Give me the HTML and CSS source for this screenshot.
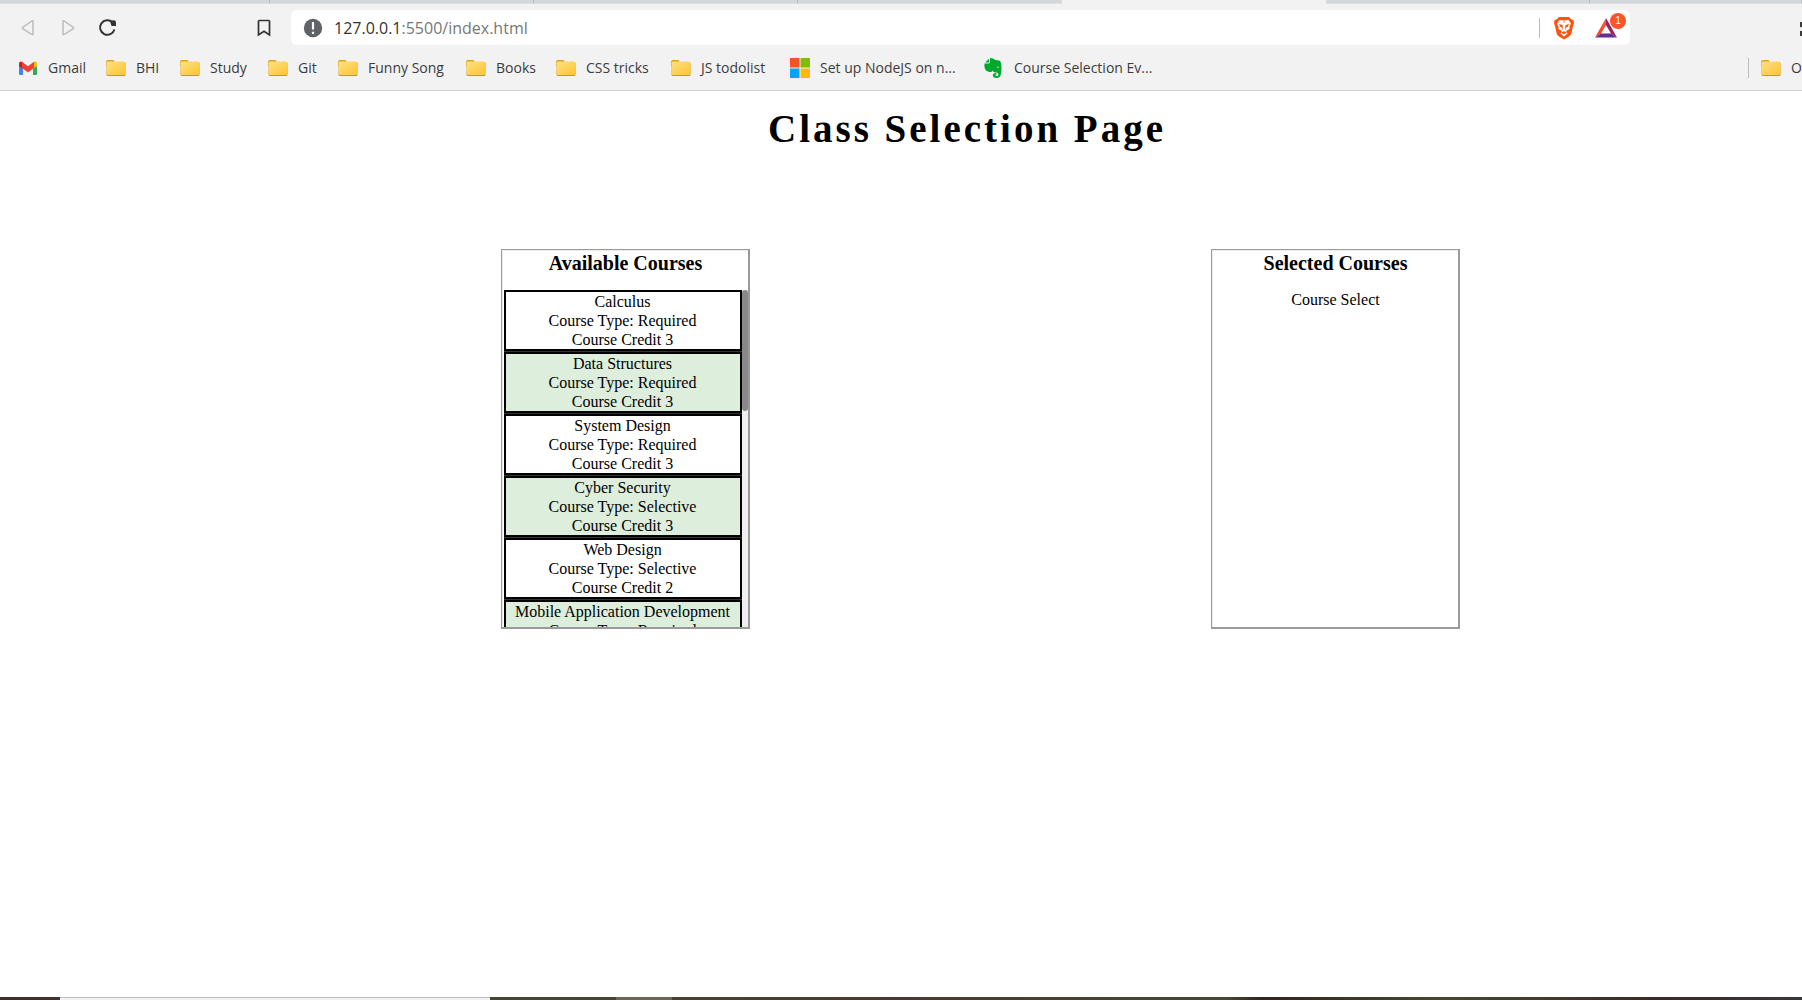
FILE: index.html
```html
<!DOCTYPE html>
<html lang="en">
<head>
<meta charset="utf-8">
<title>Class Selection Page</title>
<link rel="stylesheet" href="styles.css">
</head>
<body>
<svg class="defs" width="0" height="0" aria-hidden="true">
  <defs>
    <linearGradient id="fold" x1="0" y1="0" x2="1" y2="1"><stop offset="0" stop-color="#ffe083"/><stop offset="1" stop-color="#fdc531"/></linearGradient>
    <linearGradient id="batLeft" x1="0" y1="0" x2="0" y2="1"><stop offset="0" stop-color="#ff5b2e"/><stop offset="1" stop-color="#f0412a"/></linearGradient>
    <symbol id="folder" viewBox="0 0 20 20">
      <path d="M0 4.500Q0 2 1.500 2H7.500L9 4H18V8H0Z" fill="#e2a21b"/>
      <rect x=".5" y="4" width="19" height="14" rx="1.500" fill="#b9984a"/>
      <rect x=".5" y="3.500" width="19" height="13.500" rx="1.500" fill="url(#fold)"/>
    </symbol>
  </defs>
</svg>
<header class="chrome">
  <div class="tabs"><i></i><i></i><i></i><i></i><i class="active"></i><i></i><i></i></div>
  <div class="toolbar">
    <nav class="controls" aria-label="Navigation">
      <button type="button" aria-label="Back"><svg width="20" height="20" viewBox="0 0 20 20"><path d="M15 3.500V16Q15 17.300 13.800 16.500L5 10.800Q4 10 5 9.200L13.800 3Q15 2.200 15 3.500Z" fill="none" stroke="#bcbcbc" stroke-width="1.500"/></svg></button>
      <button type="button" aria-label="Forward"><svg width="20" height="20" viewBox="0 0 20 20"><path d="M5 3.500V16Q5 17.300 6.200 16.500L15 10.800Q16 10 15 9.200L6.200 3Q5 2.200 5 3.500Z" fill="none" stroke="#bcbcbc" stroke-width="1.500"/></svg></button>
      <button type="button" aria-label="Reload"><svg width="20" height="20" viewBox="0 0 20 20"><path d="M14.500 4.300A7.300 7.300 0 1 0 16.400 11.500" fill="none" stroke="#333" stroke-width="2"/><path d="M12 3.200Q18 1 18 4.500V8H13.500Z" fill="#333"/></svg></button>
    </nav>
    <button type="button" aria-label="Bookmark"><svg width="20" height="20" viewBox="0 0 20 20"><path d="M4.500 3.200Q4.500 2.500 5.200 2.500H14.800Q15.500 2.500 15.500 3.200V17L10 13.200L4.500 17Z" fill="none" stroke="#333" stroke-width="1.700"/></svg></button>
    <div class="address">
      <svg width="20" height="20" viewBox="0 0 20 20"><circle cx="10" cy="10" r="9.200" fill="#5f6368"/><path d="M10 4V11.500M10 13.800V16" stroke="#fff" stroke-width="2.200"/></svg>
      <a class="url" href="#">127.0.0.1<span>:5500/index.html</span></a>
      <i class="bar"></i>
      <button type="button" aria-label="Shields"><svg width="24" height="24" viewBox="0 0 24 24"><path d="M7 1H17L19.500 3.500L21.500 4L22 7L21 10L19.500 17Q19 19 17 20.500L12 23.500L7 20.500Q5 19 4.500 17L3 10L2 7L2.500 4L4.500 3.500Z" fill="#fb5410"/><path d="M12 4.500L16.500 4L19 7.500L17.500 10.500V13L14 15L15.500 17.500L12 20.500L8.500 17.500L10 15L6.500 13V10.500L5 7.500L7.500 4Z" fill="#fff"/><path d="M7 8L10.500 9L11 13L9.500 14L10.500 12L8 10.500ZM17 8L13.500 9L13 13L14.500 14L13.500 12L16 10.500ZM9 16.500L12 15.200L15 16.500L12 18.300ZM11 5.500H13L12 7Z" fill="#fb5410"/></svg></button>
      <button type="button" class="rewards" aria-label="Rewards, 1 new"><svg width="24" height="24" viewBox="0 0 24 24"><path d="M12 2L1 21.500L7 17.500L12 9Z" fill="url(#batLeft)"/><path d="M12 2L23 21.500L17 17.500L12 9Z" fill="#9e1f63"/><path d="M1 21.500H23L17 17.500H7Z" fill="#662d91"/></svg><span class="badge">1</span></button>
    </div>
    <button type="button" class="ext" aria-label="Extensions"><svg width="20" height="20" viewBox="0 0 20 20"><path d="M2 4H6.500Q6.500 1 9 1T11.500 4H16V8.500Q19 8.500 19 11T16 13.500V18H11Q11 15 8.800 15T6.500 18H2V13Q5 13 5 11T2 9Z" fill="#3b3b3b"/></svg></button>
  </div>
  <nav class="bookmarks" aria-label="Bookmarks">
    <a href="#"><svg width="20" height="20" viewBox="0 0 20 20"><path d="M1 6V16Q1 17 2 17H5V8Z" fill="#4285f4"/><path d="M19 6V16Q19 17 18 17H15V8Z" fill="#34a853"/><path d="M1 8V5.500Q1.500 2.500 4.500 4L5 9.500V11Z" fill="#c5221f"/><path d="M15 11V4.500Q18.500 2 19 5.500V8Z" fill="#fbbc04"/><path d="M4 3.700L10 8.300L16 3.700V10L10 14.500L4 10Z" fill="#ea4335"/></svg>Gmail</a>
    <a href="#"><svg width="20" height="20"><use href="#folder"/></svg>BHI</a>
    <a href="#"><svg width="20" height="20"><use href="#folder"/></svg>Study</a>
    <a href="#"><svg width="20" height="20"><use href="#folder"/></svg>Git</a>
    <a href="#"><svg width="20" height="20"><use href="#folder"/></svg>Funny Song</a>
    <a href="#"><svg width="20" height="20"><use href="#folder"/></svg>Books</a>
    <a href="#"><svg width="20" height="20"><use href="#folder"/></svg>CSS tricks</a>
    <a href="#"><svg width="20" height="20"><use href="#folder"/></svg>JS todolist</a>
    <a href="#"><svg width="20" height="20" viewBox="0 0 20 20"><path d="M0 0H9.500V9.500H0Z" fill="#f35325"/><path d="M10.500 0H20V9.500H10.500Z" fill="#81bc06"/><path d="M0 10.500H9.500V20H0Z" fill="#05a6f0"/><path d="M10.500 10.500H20V20H10.500Z" fill="#ffba08"/></svg>Set up NodeJS on n...</a>
    <a href="#"><svg width="20" height="20" viewBox="0 0 20 20"><path d="M6 0V4Q6 5.500 4.500 5.500H.5Q0 8 1 11Q2 13.500 5.500 14Q8 14.500 8.500 12.500Q9 14.500 12 14.500Q14.500 14.500 14.500 16.500Q14.300 18 12.500 18Q11.300 18 11.500 16.500L12.500 16V15Q9 14.500 8.800 17.500Q9 20 13 20Q17.500 20 17.500 11Q17.500 6 16.500 3.500Q15.500 2 11.500 2Q9.500 0 6 0Z" fill="#00a82d"/><path d="M5 .8V4Q5 4.600 4.500 4.600H1.200Z" fill="#00a82d"/><path d="M13 9.500Q13.500 7.500 15.300 9.700Q14 9.200 13 9.500Z" fill="#f2f2f2"/></svg>Course Selection Ev...</a>
    <a href="#" class="other"><svg width="20" height="20"><use href="#folder"/></svg>O</a>
  </nav>
</header>
<main>
  <h1>Class Selection Page</h1>
  <div class="panels">
    <section class="panel">
      <h2>Available Courses</h2>
      <div class="scroller">
        <ul class="courses">
          <li>Calculus<br>Course Type: Required<br>Course Credit 3</li>
          <li>Data Structures<br>Course Type: Required<br>Course Credit 3</li>
          <li>System Design<br>Course Type: Required<br>Course Credit 3</li>
          <li>Cyber Security<br>Course Type: Selective<br>Course Credit 3</li>
          <li>Web Design<br>Course Type: Selective<br>Course Credit 2</li>
          <li>Mobile Application Development<br>Course Type: Required</li>
        </ul>
        <div class="track"><div class="thumb"></div></div>
      </div>
    </section>
    <section class="panel">
      <h2>Selected Courses</h2>
      <p>Course Select</p>
    </section>
  </div>
</main>
<footer class="taskbar"><i class="search"></i><i class="task"></i></footer>
</body>
</html>
```
FILE: styles.css
```css
* { box-sizing: border-box; }
body {
  margin: 0;
  height: 100vh;
  display: flex;
  flex-direction: column;
  overflow: hidden;
  background: #fff;
  color: #000;
  font-family: "Liberation Serif", "Times New Roman", serif;
}
.defs { position: absolute; }
svg { display: block; flex: none; }
button {
  display: block;
  border: 0;
  padding: 0;
  background: none;
  flex: none;
}
.chrome {
  background: #f2f2f2;
  border-bottom: 1px solid #d3d3d3;
  height: 91px;
  flex: none;
  overflow: hidden;
  font-family: "Open Sans", "Segoe UI", sans-serif;
}
.tabs {
  display: grid;
  grid-template-columns: 270px repeat(5, 264px) 1fr;
  height: 4px;
}
.tabs i { background: #d4d8db; border-right: 1px solid #b9bdc1; border-bottom: 1px solid #dedede; }
.tabs .active, .tabs i:nth-child(4) { border-right: 0; }
.tabs .active { background: none; border-bottom: 0; }
.toolbar {
  display: flex;
  align-items: center;
  height: 47px;
  padding-left: 18px;
}
.controls { display: flex; gap: 20px; width: 236px; }
.address {
  display: flex;
  align-items: center;
  flex: 1;
  height: 35px;
  margin: 0 168px 0 17px;
  padding: 0 12px;
  border-radius: 6px;
  background: #fff;
}
.url {
  flex: 1;
  margin-left: 11px;
  font-size: 16px;
  line-height: 24px;
  color: #333;
  text-decoration: none;
}
.url span { color: #777; }
.bar { width: 1px; height: 20px; margin-right: 12px; background: #bbb; }
.rewards { position: relative; margin-left: 18px; }
.badge {
  position: absolute;
  top: -3px;
  right: -8px;
  width: 16px;
  height: 16px;
  border-radius: 50%;
  background: #fb542b;
  color: #fff;
  font-size: 10px;
  line-height: 16px;
  text-align: center;
}
.ext { margin-right: -16px; }
.bookmarks {
  display: grid;
  grid-template-columns: 88px 74px 88px 70px 128px 90px 115px 119px 194px 1fr 54px;
  align-items: center;
  height: 34px;
  padding-left: 18px;
}
.bookmarks a {
  display: flex;
  align-items: center;
  gap: 10px;
  color: #3c3c3c;
  font-size: 14px;
  line-height: 20px;
  text-decoration: none;
  white-space: nowrap;
}
.bookmarks .other { border-left: 1px solid #bbb; padding-left: 12px; overflow: hidden; }
main { flex: 1; min-height: 0; }
h1 {
  margin: 0 0 97px;
  padding: 15px 0 0 132px;
  font-size: 39px;
  line-height: 46px;
  letter-spacing: 3px;
  text-align: center;
}
.panels { display: flex; justify-content: space-around; margin: 0 112px 0 270px; }
.panel {
  width: 249px;
  height: 380px;
  padding: 2px 0 0 2px;
  display: flex;
  flex-direction: column;
  border: 2px solid #9a9a9a;
  border-width: 1px 2px 2px 1px;
  box-shadow: inset 1px 1px #ececec;
  text-align: center;
  font-size: 16px;
  line-height: 19px;
}
h2 {
  margin: 0 0 16px;
  font-size: 20px;
  line-height: 22px;
}
p { margin: 0; }
.scroller { display: flex; flex: 1; min-height: 0; overflow: hidden; }
.courses {
  flex: 1;
  display: flex;
  flex-direction: column;
  gap: 1px;
  margin: 0;
  padding: 0;
  list-style: none;
  background: #333;
}
.courses li { flex: none; border: 2px solid #000; background: #fff; }
.courses li:nth-child(even) { background: #ddeedd; }
.track { width: 6px; background: #efefef; }
.thumb { height: 36%; background: #888; border-radius: 3px; }
.taskbar {
  display: flex;
  flex: none;
  height: 3px;
  padding-left: 60px;
  background: linear-gradient(90deg, #40302c, #484634 30%, #483a32 50%, #484838 68%, #30261f 70%, #484833 80%, #3a2b29 92%, #38363a);
}
.search { width: 430px; background: #f2f2f2; border-top: 1px solid #bcbcbc; }
.task { width: 56px; margin-left: 126px; background: #6b6759; }
```
